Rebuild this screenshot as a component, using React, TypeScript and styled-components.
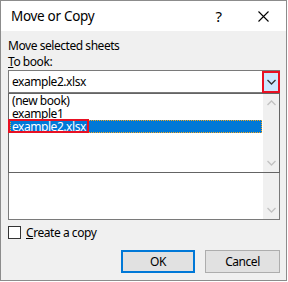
import styled, { createGlobalStyle } from 'styled-components';

const GlobalStyle = createGlobalStyle`
  html, body {
    margin: 0;
    padding: 0;
    background: #ffffff;
  }
  body {
    font-family: "Noto Sans", "Open Sans", sans-serif;
    font-size: 12px;
    letter-spacing: -0.45px;
    color: #000;
  }
`

const Dialog = styled.div`
  box-sizing: border-box;
  width: 287px;
  height: 281px;
  border: 1px solid #8c8c8c;
  background: #f0f0f0;
  display: flex;
  flex-direction: column;
`

const TitleBar = styled.div`
  height: 30px;
  background: #fff;
  display: flex;
  align-items: center;
  padding-left: 10px;
`

const Title = styled.div`
  flex: 1;
  font-size: 13.5px;
  letter-spacing: -0.3px;
`

const TitleButton = styled.div`
  width: 45px;
  height: 30px;
  display: flex;
  align-items: center;
  justify-content: center;
  font-size: 15px;
`

const Body = styled.div`
  flex: 1;
  display: flex;
  flex-direction: column;
  padding: 7px 6px 0 7px;
`

const Label = styled.div`
  line-height: 16px;
  height: 16px;
  white-space: nowrap;
`

const ComboWrap = styled.div`
  position: relative;
`

const Combo = styled.div`
  box-sizing: border-box;
  height: 23px;
  border: 1px solid #7a7a7a;
  background: #fff;
  display: flex;
  align-items: center;
  padding-left: 3px;
`

const ComboText = styled.div`
  flex: 1;
  line-height: 14px;
`

const DropButton = styled.div`
  box-sizing: border-box;
  width: 18px;
  height: 22px;
  margin-right: -1px;
  border: 2px solid #e81123;
  background: #cce8ff;
  display: flex;
  align-items: center;
  justify-content: center;
`

const Dropdown = styled.div`
  position: absolute;
  top: 100%;
  left: 0;
  right: 0;
  height: 80px;
  box-sizing: border-box;
  border: 1px solid #646464;
  background: #fff;
  display: flex;
  z-index: 2;
`

const Items = styled.div`
  flex: 1;
  padding: 0 1px;
`

const Item = styled.div<{ $selected?: boolean }>`
  position: relative;
  height: 13px;
  line-height: 13px;
  padding-left: 2px;
  white-space: nowrap;
  background: ${p => (p.$selected ? '#0078d7' : 'transparent')};
  color: ${p => (p.$selected ? '#fff' : '#000')};
  outline: ${p => (p.$selected ? '1px dotted #f7a81c' : 'none')};
  outline-offset: -1px;
`

const Marker = styled.div`
  position: absolute;
  left: -2px;
  top: -1px;
  width: 81px;
  height: 14px;
  box-sizing: border-box;
  border: 2px solid #e81123;
`

const ScrollBar = styled.div<{ $ends?: string }>`
  width: 16px;
  background: #f0f0f0;
  display: flex;
  flex-direction: column;
  justify-content: ${p => p.$ends || 'space-between'};
  align-items: center;
  padding: 6px 0;
`

const ListBox = styled.div`
  box-sizing: border-box;
  height: 127px;
  border: 1px solid #7a7a7a;
  background: #fff;
  display: flex;
  justify-content: flex-end;
`

const CheckRow = styled.div`
  display: flex;
  align-items: center;
  gap: 5px;
  margin-top: 6px;
  height: 13px;
  line-height: 13px;
`

const CheckBox = styled.div`
  box-sizing: border-box;
  width: 13px;
  height: 13px;
  border: 1px solid #333;
  background: #fff;
`

const ButtonRow = styled.div`
  display: flex;
  justify-content: flex-end;
  gap: 10px;
  margin-top: 11px;
`

const Button = styled.div<{ $primary?: boolean; $w: number }>`
  box-sizing: border-box;
  width: ${p => p.$w}px;
  height: 23px;
  background: #e1e1e1;
  border: ${p => (p.$primary ? '2px solid #0078d7' : '1px solid #adadad')};
  display: flex;
  align-items: center;
  justify-content: center;
`

function Chevron({ up, color }: { up?: boolean; color: string }) {
  return (
    <svg width="9" height="6" viewBox="0 0 9 6">
      <path
        d={up ? 'M0.5 5 L4.5 1 L8.5 5' : 'M0.5 1 L4.5 5 L8.5 1'}
        fill="none"
        stroke={color}
        strokeWidth="1.3"
      />
    </svg>
  )
}

export default function App() {
  return (
    <>
      <GlobalStyle />
      <Dialog>
        <TitleBar>
          <Title>Move or Copy</Title>
          <TitleButton>?</TitleButton>
          <TitleButton>
            <svg width="11" height="11" viewBox="0 0 11 11">
              <path d="M0.5 0.5 L10.5 10.5 M10.5 0.5 L0.5 10.5" stroke="#000" strokeWidth="1.1" />
            </svg>
          </TitleButton>
        </TitleBar>
        <Body>
          <Label>Move selected sheets</Label>
          <Label><u>T</u>o book:</Label>
          <ComboWrap>
            <Combo>
              <ComboText>example2.xlsx</ComboText>
              <DropButton>
                <Chevron color="#333" />
              </DropButton>
            </Combo>
            <Dropdown>
              <Items>
                <Item>(new book)</Item>
                <Item>example1</Item>
                <Item $selected>
                  example2.xlsx
                  <Marker />
                </Item>
              </Items>
              <ScrollBar>
                <Chevron up color="#c2c2c2" />
                <Chevron color="#c2c2c2" />
              </ScrollBar>
            </Dropdown>
          </ComboWrap>
          <ListBox>
            <ScrollBar $ends="flex-end">
              <Chevron color="#c2c2c2" />
            </ScrollBar>
          </ListBox>
          <CheckRow>
            <CheckBox />
            <span><u>C</u>reate a copy</span>
          </CheckRow>
          <ButtonRow>
            <Button $primary $w={74}>OK</Button>
            <Button $w={75}>Cancel</Button>
          </ButtonRow>
        </Body>
      </Dialog>
    </>
  )
}
